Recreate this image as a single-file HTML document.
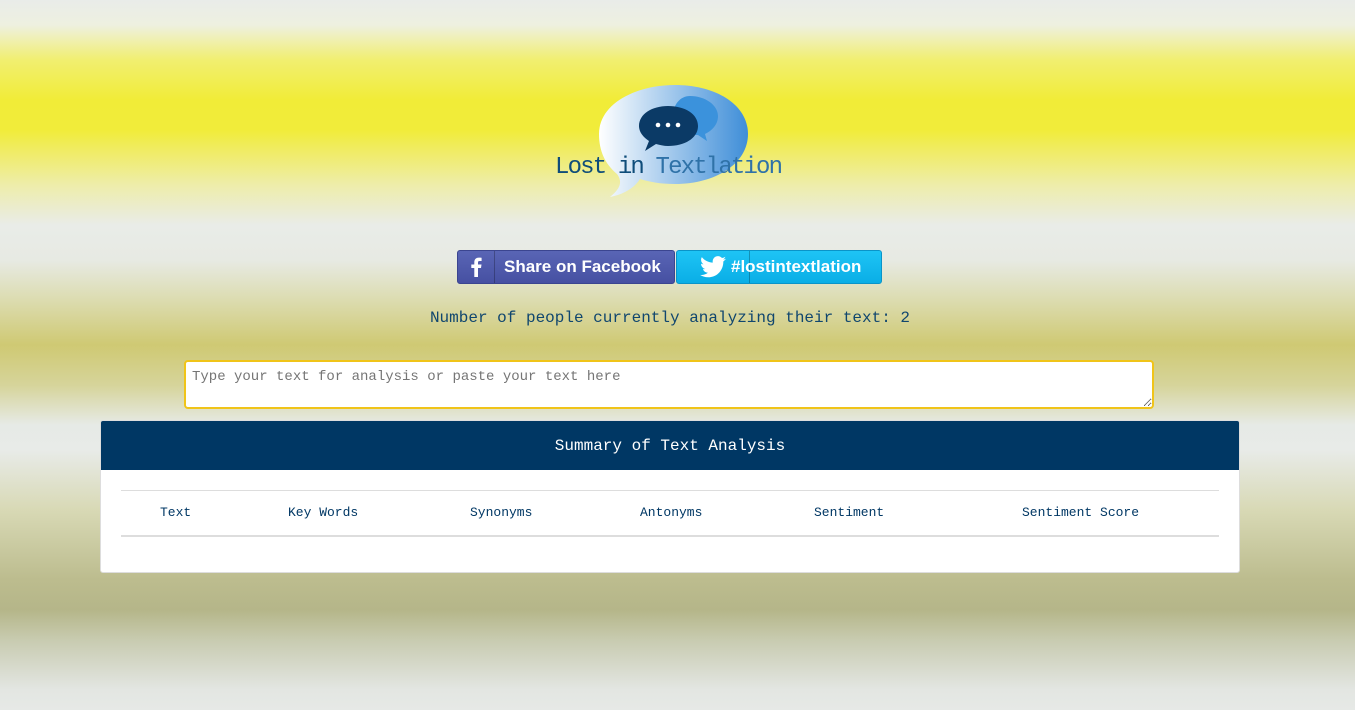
<!DOCTYPE html>
<html><head><style>
body{margin:0;width:1355px;height:710px;overflow:hidden;font-family:"Liberation Mono",monospace;
background:linear-gradient(to bottom,#e9ece9 0px,#eef0e0 25px,#f1ef70 60px,#f1ec38 100px,#f1ec3a 130px,#eeedaa 185px,#e9ece8 225px,#e7eae3 260px,#dcdcb0 300px,#cfc973 345px,#d6d49a 385px,#e6eae6 425px,#e8ebe8 450px,#d8d9b5 510px,#bcbc8e 580px,#b5b689 610px,#c8cbb0 640px,#e3e6e2 690px,#e6e9e6 710px);position:relative}
.logo{position:absolute;left:555px;top:84px;width:230px;height:115px}
.btn{position:absolute;top:250px;height:34px;border-radius:3px;color:#fff;font-family:"Liberation Sans",sans-serif;font-weight:bold;font-size:17px;box-sizing:border-box}
.fb{left:457px;width:218px;background:linear-gradient(#5965b5,#4650a2);border:1px solid #3b4590}
.tw{left:676px;width:206px;background:linear-gradient(#1ec4f5,#0aaee6);border:1px solid #0a94c8}
.btn .ic{position:absolute;left:0;top:0;height:32px;border-right:1px solid rgba(0,0,0,.25);display:flex;align-items:center;justify-content:center}
.btn .tx{position:absolute;top:6px}
.count{position:absolute;top:309px;left:0;width:1340px;text-align:center;color:#10466e;font-size:16px}
textarea{position:absolute;left:184px;top:360px;width:970px;height:49px;box-sizing:border-box;border:2px solid #f0c419;border-radius:4px;background:#fff;font-family:"Liberation Mono",monospace;font-size:14px;padding:7px 6px;color:#888;resize:vertical}
.panel{position:absolute;left:100px;top:420px;width:1140px;height:153px;background:#fff;border:1px solid #ddd;border-radius:3px;box-sizing:border-box;overflow:hidden}
.ph{background:#003764;color:#fff;height:49px;line-height:50px;text-align:center;font-size:16px}
.tbl{position:absolute;left:20px;top:69px;width:1098px;height:44px;border-top:1px solid #ddd;border-bottom:2px solid #ddd}
.tbl span{position:absolute;top:14px;font-size:13px;color:#003764}
</style></head><body>
<svg class="logo" viewBox="0 0 230 115">
<defs><linearGradient id="g" x1="0" x2="1"><stop offset="0" stop-color="#fff"/><stop offset="1" stop-color="#3f8ed8"/></linearGradient></defs>
<path d="M120 1C160 1 193 20 193 50C193 80 160 100 120 100C105 100 95 98 85 95C80 103 70 110 55 113C65 105 68 98 62 90C50 80 44 67 44 50C44 20 80 1 120 1Z" fill="url(#g)"/>
<path d="M135 12C150 12 163 21 163 32C163 40 158 46 150 50L152 57L143 51C130 51 118 43 118 32C118 21 125 12 135 12Z" fill="#3b92dc"/>
<path d="M113 22C130 22 143 30 143 42C143 54 130 62 113 62C109 62 105 61 101 60L90 67L94 57C88 53 84 48 84 42C84 30 97 22 113 22Z" fill="#0b3a66"/>
<circle cx="103" cy="41" r="2.3" fill="#fff"/><circle cx="113" cy="41" r="2.3" fill="#fff"/><circle cx="123" cy="41" r="2.3" fill="#fff"/>
<text x="0" y="89" font-family="Liberation Mono,monospace" font-size="24" fill="#0f4d7a" textLength="228">Lost in <tspan fill="#2f72a8">Textlation</tspan></text>
</svg>
<div class="btn fb"><div class="ic" style="width:36px"><svg width="12" height="20" viewBox="0 0 12 20"><path d="M8 20V11h3l.5-3.5H8V5.5C8 4.5 8.3 4 9.6 4H11.6V.8C11 .7 10 .6 8.8.6 6 .6 4.3 2.3 4.3 5.3V7.5H1.3V11h3v9z" fill="#fff"/></svg></div><div class="tx" style="left:46px">Share on Facebook</div></div>
<div class="btn tw"><div class="ic" style="width:72px"><svg width="26" height="22" viewBox="0 0 24 20"><path d="M24 2.4c-.9.4-1.8.6-2.8.8 1-.6 1.8-1.6 2.2-2.7-1 .6-2 1-3.1 1.2C19.3.7 18 0 16.6 0c-2.7 0-4.9 2.2-4.9 4.9 0 .4 0 .8.1 1.1C7.700 5.8 4.100 3.900 1.700.9c-.4.7-.7 1.6-.7 2.5 0 1.7.9 3.2 2.2 4.1-.8 0-1.6-.2-2.2-.6v.1c0 2.4 1.7 4.4 3.9 4.8-.4.1-.8.2-1.3.2-.3 0-.6 0-.9-.1.6 2 2.4 3.4 4.6 3.4-1.700 1.3-3.800 2.1-6.100 2.1-.4 0-.8 0-1.2-.1 2.2 1.4 4.8 2.2 7.5 2.2 9.1 0 14-7.5 14-14v-.6c1-.7 1.8-1.6 2.500-2.500z" fill="#fff"/></svg></div><div class="tx" style="left:54px">#lostintextlation</div></div>
<div class="count">Number of people currently analyzing their text: 2</div>
<textarea placeholder="Type your text for analysis or paste your text here"></textarea>
<div class="panel"><div class="ph">Summary of Text Analysis</div>
<div class="tbl"><span style="left:39px">Text</span><span style="left:167px">Key Words</span><span style="left:349px">Synonyms</span><span style="left:519px">Antonyms</span><span style="left:693px">Sentiment</span><span style="left:901px">Sentiment Score</span></div></div>
</body></html>
